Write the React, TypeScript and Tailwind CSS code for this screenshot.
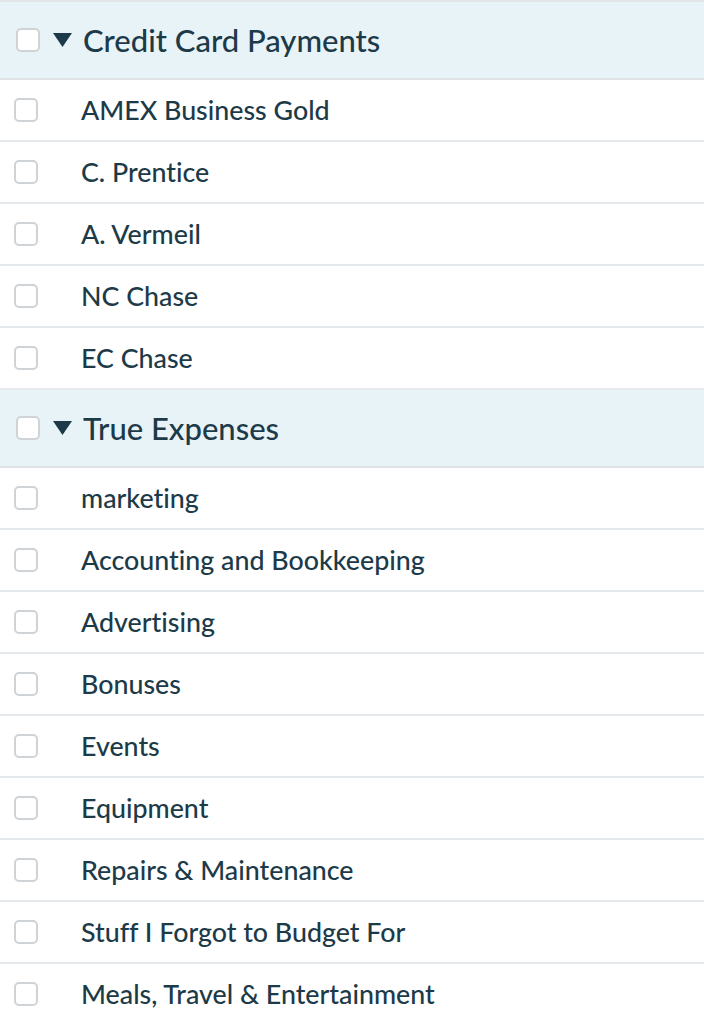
import React from 'react';

type Group = {
  title: string;
  items: string[];
};

const groups: Group[] = [
  {
    title: 'Credit Card Payments',
    items: ['AMEX Business Gold', 'C. Prentice', 'A. Vermeil', 'NC Chase', 'EC Chase'],
  },
  {
    title: 'True Expenses',
    items: [
      'marketing',
      'Accounting and Bookkeeping',
      'Advertising',
      'Bonuses',
      'Events',
      'Equipment',
      'Repairs & Maintenance',
      'Stuff I Forgot to Budget For',
      'Meals, Travel & Entertainment',
    ],
  },
];

const Checkbox: React.FC = () => (
  <span className="block w-[24px] h-[24px] shrink-0 rounded-[5px] border-2 border-[#cfd3d6] bg-white" />
);

export default function App() {
  return (
    <div
      className="w-full border-t-2 border-[#e1e5e8] text-[#1c3a48] [font-variant-ligatures:none]"
      style={{ fontFamily: 'Lato, "Noto Sans", sans-serif' }}
    >
      {groups.map((g) => (
        <div key={g.title}>
          <div className="flex items-center h-[78px] pl-4 bg-[#e8f3f8] border-b-2 border-[#dfe3e6]">
            <Checkbox />
            <svg width="19" height="14" viewBox="0 0 19 14" className="ml-[13px] shrink-0">
              <path d="M0 0 H19 L9.5 14 Z" fill="#1c3a48" />
            </svg>
            <span className="ml-[11px] text-[31px] leading-none font-medium">{g.title}</span>
          </div>
          {g.items.map((item) => (
            <div key={item} className="flex items-center h-[62px] pl-[14px] border-b-2 border-[#e6e9eb]">
              <Checkbox />
              <span className="ml-[43px] text-[26.8px] leading-none font-medium">{item}</span>
            </div>
          ))}
        </div>
      ))}
    </div>
  );
}
